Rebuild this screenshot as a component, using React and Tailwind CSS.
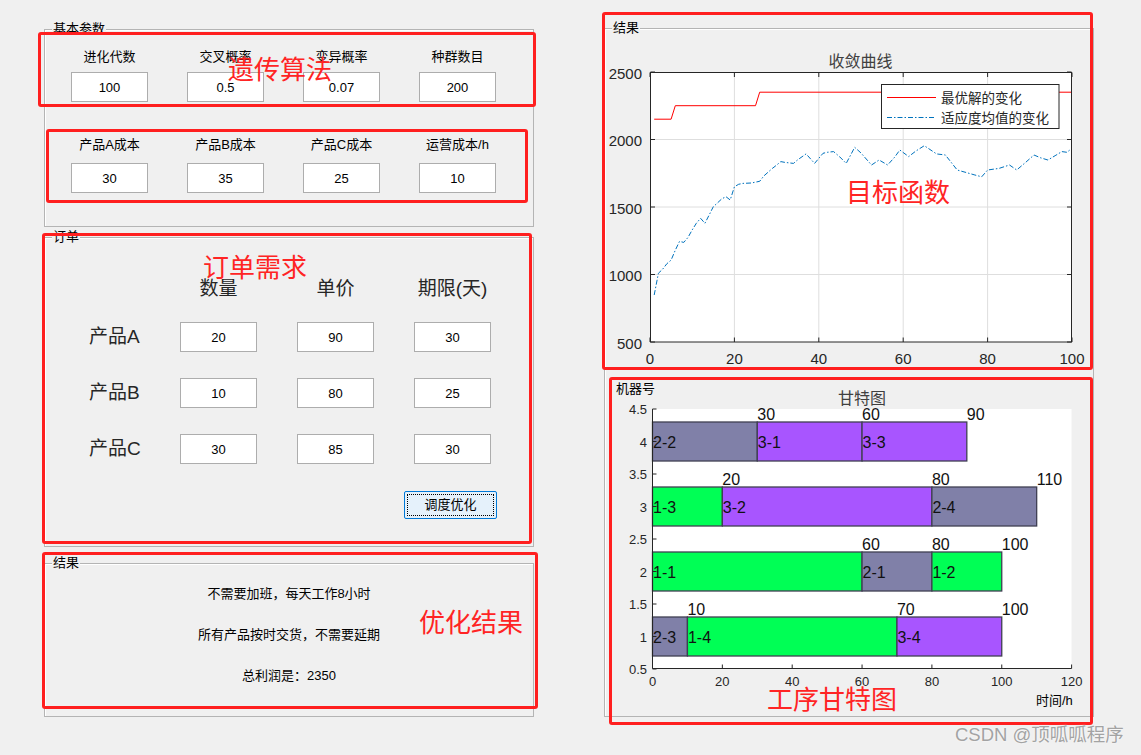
import React from 'react';

const cjk = "font-['Liberation_Sans','Noto_Sans_CJK_SC',sans-serif]";
const svgFont = 'Liberation Sans, Noto Sans CJK SC, sans-serif';

const basicRows = [
  [
    { label: '进化代数', value: '100' },
    { label: '交叉概率', value: '0.5' },
    { label: '变异概率', value: '0.07' },
    { label: '种群数目', value: '200' },
  ],
  [
    { label: '产品A成本', value: '30' },
    { label: '产品B成本', value: '35' },
    { label: '产品C成本', value: '25' },
    { label: '运营成本/h', value: '10' },
  ],
];

const orders = [
  { name: '产品A', values: ['20', '90', '30'] },
  { name: '产品B', values: ['10', '80', '25'] },
  { name: '产品C', values: ['30', '85', '30'] },
];

const Field = ({ value }) => (
  <input
    readOnly
    value={value}
    className="h-[30px] w-[77px] border border-[#adadad] bg-white text-center text-[13px] text-black outline-none"
  />
);

const GroupBox = ({ title, className, children }) => (
  <div className={`relative border border-[#b4b4b4] shadow-[inset_1px_1px_0_#ffffff] ${className}`}>
    {title && (
      <span className="absolute -top-[9px] left-[7px] bg-[#f0f0f0] px-px text-[13px] leading-[16px] text-black">
        {title}
      </span>
    )}
    {children}
  </div>
);

// convergence chart helpers (page coordinates)
const gx = (g) => 650 + g * 4.22;
const vy = (v) => 342 - (v - 500) * 0.135;

const bestCurve = [
  [1, 2150], [5, 2150], [6, 2250], [25, 2250], [26, 2350], [100, 2350],
];

const meanCurve = [
  [1, 848], [2, 1009], [3, 1040], [4, 1080], [5, 1107], [6, 1180], [7, 1245], [8, 1238],
  [9, 1275], [10, 1330], [11, 1380], [12, 1416], [13, 1379], [14, 1440], [15, 1502],
  [16, 1530], [17, 1560], [18, 1576], [19, 1552], [20, 1650], [21, 1668], [22, 1675],
  [24, 1678], [26, 1690], [27, 1730], [29, 1786], [30, 1810], [31, 1836], [32, 1830],
  [34, 1823], [35, 1850], [37, 1893], [39, 1823], [41, 1898], [42, 1905], [43.5, 1910],
  [45, 1870], [46.5, 1823], [48.5, 1942], [50, 1900], [52.5, 1811], [54.3, 1848],
  [56.3, 1811], [58, 1870], [59.2, 1922], [61.3, 1873], [63, 1915], [65, 1954],
  [67.9, 1893], [70, 1885], [72.8, 1774], [75, 1755], [77, 1737], [78.6, 1724],
  [80, 1774], [82.7, 1786], [85.2, 1811], [86.9, 1774], [89, 1830], [91, 1885],
  [92.5, 1865], [94.3, 1848], [96, 1880], [97.6, 1910], [98.8, 1905], [100, 1935],
];

const toPts = (arr) => arr.map(([g, v]) => `${gx(g).toFixed(1)},${vy(v).toFixed(1)}`).join(' ');

const ConvergenceChart = () => {
  const xt = [0, 20, 40, 60, 80, 100];
  const yt = [500, 1000, 1500, 2000, 2500];
  return (
    <svg width="488" height="343" viewBox="605 29 488 343" className="block" fontFamily={svgFont}>
      <text x="860.5" y="61" textAnchor="middle" dominantBaseline="central" fontSize="16" fill="#404040">收敛曲线</text>
      <rect x="650.5" y="72.5" width="421" height="269.5" fill="#ffffff" />
      {xt.slice(1, -1).map((g) => (
        <line key={g} x1={gx(g)} x2={gx(g)} y1="72.5" y2="342" stroke="#dedede" />
      ))}
      {yt.slice(1, -1).map((v) => (
        <line key={v} x1="650.5" x2="1071.5" y1={vy(v)} y2={vy(v)} stroke="#dedede" />
      ))}
      <polyline points={toPts(bestCurve)} fill="none" stroke="#ff0000" strokeWidth="1" />
      <polyline
        points={toPts(meanCurve)}
        fill="none"
        stroke="#0072bd"
        strokeWidth="1"
        strokeDasharray="5 2 1.5 2"
      />
      <rect x="650.5" y="72.5" width="421" height="269.5" fill="none" stroke="#262626" strokeWidth="1" />
      {xt.map((g) => (
        <g key={g}>
          <line x1={gx(g)} x2={gx(g)} y1="342" y2="337.5" stroke="#262626" />
          <line x1={gx(g)} x2={gx(g)} y1="72.5" y2="77" stroke="#262626" />
          <text x={gx(g)} y="358" textAnchor="middle" dominantBaseline="central" fontSize="15" fill="#262626">{g}</text>
        </g>
      ))}
      {yt.map((v) => (
        <g key={v}>
          <line x1="650.5" x2="655" y1={vy(v)} y2={vy(v)} stroke="#262626" />
          <line x1="1071.5" x2="1067" y1={vy(v)} y2={vy(v)} stroke="#262626" />
          <text x="642" y={vy(v) + 1} textAnchor="end" dominantBaseline="central" fontSize="15" fill="#262626">{v}</text>
        </g>
      ))}
      <rect x="881.5" y="84.5" width="177.5" height="44" fill="#ffffff" stroke="#262626" strokeWidth="1" />
      <line x1="887" x2="936" y1="97.5" y2="97.5" stroke="#ff0000" />
      <line x1="887" x2="936" y1="117.5" y2="117.5" stroke="#0072bd" strokeDasharray="5 2 1.5 2" />
      <text x="941" y="98" dominantBaseline="central" fontSize="13.5" fill="#262626">最优解的变化</text>
      <text x="941" y="118" dominantBaseline="central" fontSize="13.5" fill="#262626">适应度均值的变化</text>
    </svg>
  );
};

// gantt chart helpers
const tx = (t) => 652.5 + t * 3.4925;
const my = (m) => 409 + (4.5 - m) * 65;
const GRAY = '#8080a8';
const GREEN = '#00ff55';
const PURPLE = '#a855ff';

const machines = [
  { m: 4, ops: [['2-2', 0, 30, GRAY], ['3-1', 30, 60, PURPLE], ['3-3', 60, 90, PURPLE]] },
  { m: 3, ops: [['1-3', 0, 20, GREEN], ['3-2', 20, 80, PURPLE], ['2-4', 80, 110, GRAY]] },
  { m: 2, ops: [['1-1', 0, 60, GREEN], ['2-1', 60, 80, GRAY], ['1-2', 80, 100, GREEN]] },
  { m: 1, ops: [['2-3', 0, 10, GRAY], ['1-4', 10, 70, GREEN], ['3-4', 70, 100, PURPLE]] },
];

const GanttChart = () => {
  const xt = [0, 20, 40, 60, 80, 100, 120];
  const yt = [0.5, 1, 1.5, 2, 2.5, 3, 3.5, 4, 4.5];
  return (
    <svg width="488" height="344" viewBox="605 372 488 344" className="block" fontFamily={svgFont}>
      <text x="616" y="388" dominantBaseline="central" fontSize="13" fill="#000000">机器号</text>
      <text x="862" y="398" textAnchor="middle" dominantBaseline="central" fontSize="16" fill="#404040">甘特图</text>
      <rect x="652.5" y="409" width="419" height="259" fill="#ffffff" />
      {machines.map(({ m, ops }) =>
        ops.map(([name, s, e, color]) => (
          <g key={name}>
            <rect
              x={tx(s)}
              y={my(m) - 19.5}
              width={tx(e) - tx(s)}
              height="39"
              fill={color}
              stroke="#3f3f52"
              strokeWidth="1.3"
            />
            <text x={tx(s) + 0.5} y={my(m) + 1} dominantBaseline="central" fontSize="16" fill="#111111">{name}</text>
            <text x={tx(e)} y={my(m) - 27.5} dominantBaseline="central" fontSize="16" fill="#111111">{e}</text>
          </g>
        ))
      )}
      <line x1="652.5" x2="652.5" y1="409" y2="668.5" stroke="#262626" />
      <line x1="652.5" x2="1071.6" y1="668.5" y2="668.5" stroke="#262626" />
      {yt.map((v) => (
        <g key={v}>
          <line x1="652.5" x2="656.5" y1={my(v)} y2={my(v)} stroke="#262626" />
          <text x="647" y={my(v) + 0.5} textAnchor="end" dominantBaseline="central" fontSize="13" fill="#262626">{v}</text>
        </g>
      ))}
      {xt.map((t) => (
        <g key={t}>
          <line x1={tx(t)} x2={tx(t)} y1="668.5" y2="664.5" stroke="#262626" />
          <text x={tx(t)} y="681" textAnchor="middle" dominantBaseline="central" fontSize="13" fill="#262626">{t}</text>
        </g>
      ))}
      <text x="1036" y="700" dominantBaseline="central" fontSize="13" fill="#000000">时间/h</text>
    </svg>
  );
};

export default function App() {
  return (
    <div className={`relative h-[755px] w-[1141px] overflow-hidden bg-[#f0f0f0] text-black ${cjk}`}>
      <div className="flex items-start">
        {/* left column */}
        <div className="ml-[44px] mt-[29px] flex w-[490px] flex-col">
          <GroupBox title="基本参数" className="h-[198px]">
            <div className="pl-[26px] pt-[19px]">
              {basicRows.map((row, i) => (
                <div
                  key={i}
                  className={`grid grid-cols-[77px_77px_77px_77px] gap-x-[39px] ${i === 1 ? 'mt-[35px]' : ''}`}
                >
                  {row.map((item) => (
                    <div key={item.label} className="flex flex-col items-center">
                      <span className="h-[16px] whitespace-nowrap text-[13px] leading-[16px]">{item.label}</span>
                      <div className={i === 1 ? 'mt-[10px]' : 'mt-[7px]'}>
                        <Field value={item.value} />
                      </div>
                    </div>
                  ))}
                </div>
              ))}
            </div>
          </GroupBox>

          <GroupBox title="订单" className="mt-[10px] h-[310px]">
            <div className="pt-[38px]">
              <div className="grid grid-cols-[95px_77px_77px_77px] items-center gap-x-[40px] text-[19px] leading-[26px] text-[#262626]">
                <span />
                <span className="whitespace-nowrap text-center">数量</span>
                <span className="whitespace-nowrap text-center">单价</span>
                <span className="whitespace-nowrap text-center">期限(天)</span>
              </div>
              <div className="mt-[20px] grid grid-cols-[95px_77px_77px_77px] items-center gap-x-[40px] gap-y-[26px]">
                {orders.map((o) => (
                  <React.Fragment key={o.name}>
                    <span className="whitespace-nowrap pl-[44px] text-[19px] leading-[26px] text-[#262626]">{o.name}</span>
                    {o.values.map((v, j) => (
                      <Field key={j} value={v} />
                    ))}
                  </React.Fragment>
                ))}
              </div>
              <button
                type="button"
                className="ml-[359px] mt-[27px] flex h-[28px] w-[93px] items-center justify-center rounded-[2px] border border-[#0078d7] bg-[#e5f1fb] p-[2px]"
              >
                <span className="flex h-full w-full items-center justify-center border border-dotted border-black text-[13px]">
                  调度优化
                </span>
              </button>
            </div>
          </GroupBox>

          <GroupBox title="结果" className="mt-[16px] h-[154px]">
            <div className="flex flex-col items-center gap-[25px] pt-[22px] text-[13px] leading-[16px]">
              <span>不需要加班，每天工作8小时</span>
              <span>所有产品按时交货，不需要延期</span>
              <span>总利润是：2350</span>
            </div>
          </GroupBox>
        </div>

        {/* right column */}
        <div className="ml-[70px] mt-[28px] w-[490px]">
          <GroupBox title="结果" className="h-[689px]">
            <ConvergenceChart />
            <GanttChart />
          </GroupBox>
        </div>
      </div>

      {/* red annotations drawn over the screenshot */}
      <div className="absolute left-[38px] top-[32px] h-[75px] w-[498px] rounded-[3px] border-[3px] border-[#ff1f1f]" />
      <div className="absolute left-[46px] top-[129px] h-[74px] w-[482px] rounded-[3px] border-[3px] border-[#ff1f1f]" />
      <div className="absolute left-[42px] top-[233px] h-[311px] w-[490px] rounded-[3px] border-[3px] border-[#ff1f1f]" />
      <div className="absolute left-[42px] top-[552px] h-[157px] w-[496px] rounded-[3px] border-[3px] border-[#ff1f1f]" />
      <div className="absolute left-[602px] top-[12px] h-[358px] w-[491px] rounded-[3px] border-[3px] border-[#ff1f1f]" />
      <div className="absolute left-[609px] top-[377px] h-[348px] w-[484px] rounded-[3px] border-[3px] border-[#ff1f1f]" />

      <span className="absolute left-[228px] top-[55px] text-[26px] leading-[30px] text-[#ff2424]">遗传算法</span>
      <span className="absolute left-[203px] top-[253px] text-[26px] leading-[30px] text-[#ff2424]">订单需求</span>
      <span className="absolute left-[419px] top-[608px] text-[26px] leading-[30px] text-[#ff2424]">优化结果</span>
      <span className="absolute left-[846px] top-[178px] text-[26px] leading-[30px] text-[#ff2424]">目标函数</span>
      <span className="absolute left-[767px] top-[685px] text-[26px] leading-[30px] text-[#ff2424]">工序甘特图</span>

      <span className="absolute left-[955px] top-[723px] text-[18.5px] leading-[24px] text-[#a3a3a3] [text-shadow:0_0_2px_#ffffff]">
        CSDN @顶呱呱程序
      </span>
    </div>
  );
}
